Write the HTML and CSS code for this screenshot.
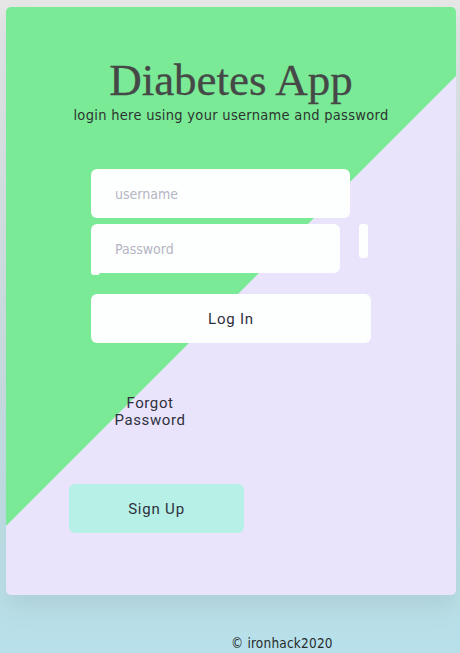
FILE: index.html
```html
<!DOCTYPE html>
<html lang="en">
<head>
<meta charset="utf-8">
<title>Diabetes App</title>
<link rel="stylesheet" href="styles.css">
</head>
<body>
<main class="card">
  <h1 class="title">Diabetes App</h1>
  <p class="subtitle">login here using your username and password</p>
  <form class="login">
    <input class="field field-user" type="text" placeholder="username">
    <div class="pass-row">
      <div class="pass-wrap">
        <input class="field field-pass" type="password" placeholder="Password">
        <span class="pass-tab"></span>
      </div>
      <span class="pass-toggle"></span>
    </div>
    <button class="btn btn-login" type="button">Log In</button>
  </form>
  <a class="forgot">Forgot Password</a>
  <button class="btn btn-signup" type="button">Sign Up</button>
</main>
<footer class="footer">© ironhack2020</footer>
</body>
</html>
```
FILE: styles.css
```css
html, body {
  margin: 0;
  padding: 0;
}
body {
  width: 460px;
  height: 653px;
  overflow: hidden;
  background: linear-gradient(180deg, #e6e6e6 0%, #c8dde2 60%, #b7e0ea 100%);
  font-family: "Liberation Sans Narrow", "DejaVu Sans Condensed", sans-serif;
}
.card {
  box-sizing: border-box;
  margin: 7px 0 0 6px;
  width: 450px;
  height: 588px;
  border-radius: 5px;
  background: linear-gradient(135deg, #7aea96 calc(50% - 0.6px), #e9e4fc calc(50% + 0.6px));
  box-shadow: 0 14px 20px rgba(120, 140, 140, 0.16);
  padding-top: 48px;
  display: flex;
  flex-direction: column;
}
.title {
  margin: 0;
  text-align: center;
  font-family: "Liberation Serif", "DejaVu Serif", serif;
  font-weight: normal;
  font-size: 45px;
  line-height: 50px;
  color: #454846;
  -webkit-text-stroke: 0.3px #454846;
}
.subtitle {
  margin: 0;
  text-align: center;
  font-size: 14.5px;
  line-height: 21px;
  letter-spacing: 0.3px;
  color: #2c3430;
}
.login {
  margin: 43px 0 0 85px;
  display: flex;
  flex-direction: column;
}
.field {
  box-sizing: border-box;
  border: none;
  outline: none;
  border-radius: 6px;
  background: #fdfefe;
  height: 49px;
  padding: 0 0 0 24px;
  font-family: "Liberation Sans Narrow", "DejaVu Sans Condensed", sans-serif;
  font-size: 14px;
  color: #333;
}
.field::placeholder {
  color: #b5b5c3;
}
.field-user {
  width: 259px;
}
.pass-row {
  margin-top: 6px;
  display: flex;
  align-items: flex-start;
  gap: 19px;
}
.pass-wrap {
  position: relative;
  width: 249px;
  height: 49px;
}
.field-pass {
  width: 249px;
}
.pass-tab {
  position: absolute;
  left: 0;
  top: 44px;
  width: 9px;
  height: 7px;
  background: #fdfefe;
  border-radius: 0 0 3px 3px;
}
.pass-toggle {
  width: 9px;
  height: 34px;
  background: #fdfefe;
  border-radius: 3px;
}
.btn {
  box-sizing: border-box;
  border: none;
  border-radius: 6px;
  height: 49px;
  font-family: "Roboto", "DejaVu Sans", sans-serif;
  font-size: 15px;
  letter-spacing: 0.8px;
  color: #2f3040;
  padding: 0;
}
.btn-login {
  margin-top: 21px;
  width: 280px;
  background: #fdfefe;
}
.forgot {
  display: block;
  margin: 52px 0 0 94px;
  width: 100px;
  text-align: center;
  font-family: "Roboto", "DejaVu Sans", sans-serif;
  font-size: 15px;
  line-height: 17px;
  letter-spacing: 0.6px;
  color: #2f3040;
}
.btn-signup {
  margin: 55px 0 0 63px;
  width: 175px;
  background: #b6f0e6;
}
.footer {
  margin: 38px 0 0 231px;
  font-size: 13.5px;
  line-height: 20px;
  letter-spacing: 0.2px;
  color: #262b2c;
}
```
